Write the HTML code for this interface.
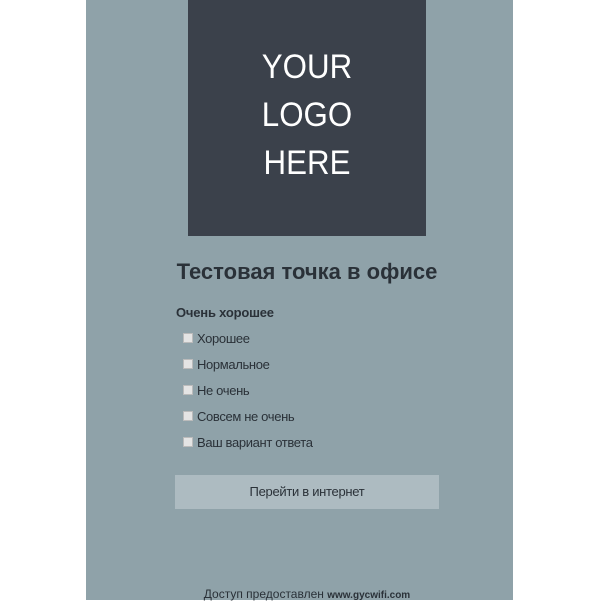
<!DOCTYPE html>
<html><head><meta charset="utf-8"><style>
body{margin:0;background:#fff;width:600px;height:600px;overflow:hidden;font-family:"Liberation Sans","Noto Sans CJK SC",sans-serif;}
.p{position:absolute;left:86px;top:0;width:427px;height:600px;background:#8fa2a9;}
.logo{position:absolute;left:188px;top:0;width:238px;height:236px;background:#3b414b;color:#fff;text-align:center;font-size:34px;line-height:48px;}
.logo div{padding-top:43px;transform:scaleX(0.92);}
h1{position:absolute;left:0;width:614px;top:259px;margin:0;text-align:center;font-size:22px;color:#2a3138;font-weight:bold;}
.q{position:absolute;left:176px;top:305px;font-size:13px;font-weight:bold;color:#2a3138;letter-spacing:-0.2px;}
.o{position:absolute;left:183px;font-size:13px;color:#2a3138;letter-spacing:-0.35px;}
.o span{display:inline-block;width:8px;height:8px;background:#e4e4e4;border:1px solid #bbb;margin-right:4px;vertical-align:0px;}
.b{position:absolute;left:175px;top:475px;width:264px;height:34px;background:#adbbc1;text-align:center;line-height:34px;font-size:13px;color:#2a3138;letter-spacing:-0.3px;}
.f{position:absolute;left:0;width:614px;top:587px;text-align:center;font-size:12px;color:#2a3138;}
</style></head><body>
<div class="p"></div>
<div class="logo"><div>YOUR<br>LOGO<br>HERE</div></div>
<h1>Тестовая точка в офисе</h1>
<div class="q">Очень хорошее</div>
<div class="o" style="top:331px"><span></span>Хорошее</div>
<div class="o" style="top:357px"><span></span>Нормальное</div>
<div class="o" style="top:383px"><span></span>Не очень</div>
<div class="o" style="top:409px"><span></span>Совсем не очень</div>
<div class="o" style="top:435px"><span></span>Ваш вариант ответа</div>
<div class="b">Перейти в интернет</div>
<div class="f">Доступ предоставлен <b style="font-size:10px">www.gycwifi.com</b></div>
</body></html>
